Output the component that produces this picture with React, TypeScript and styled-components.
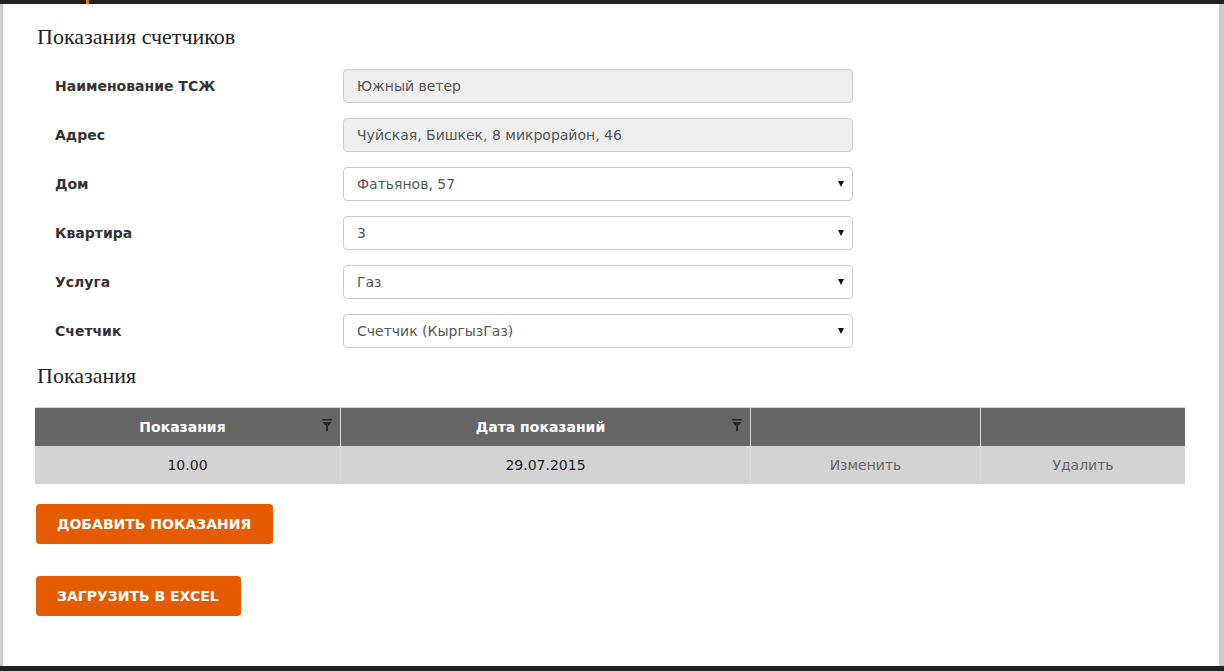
import styled, { createGlobalStyle } from "styled-components"

const GlobalStyle = createGlobalStyle`
    html, body {
        margin: 0;
        padding: 0;
        background: #ffffff;
    }
    body {
        font-family: "DejaVu Sans", Verdana, sans-serif;
    }
`

const Frame = styled.div`
    display: flex;
    flex-direction: column;
    width: 1224px;
    height: 671px;
    overflow: hidden;
`

const TopBar = styled.div`
    display: flex;
    height: 4px;
    background-color: #222222;
    padding-left: 86px;
`

const TopMark = styled.div`
    width: 3px;
    height: 4px;
    background-color: #e07a10;
`

const BottomBar = styled.div`
    height: 5px;
    background-color: #222222;
`

const Middle = styled.div`
    display: flex;
    flex: 1;
`

interface StripProps {
    w: number
}

const Strip = styled.div<StripProps>`
    width: ${p => p.w}px;
    background-color: #cccccc;
`

const Content = styled.div`
    flex: 1;
    padding: 19px 34px 0 32px;
    background-color: #ffffff;
`

const Title = styled.h2`
    margin: 0 0 0 2px;
    font-family: "Liberation Serif", "DejaVu Serif", serif;
    font-weight: normal;
    font-size: 22px;
    line-height: 28px;
    color: #222222;
`

const Form = styled.div`
    display: flex;
    flex-direction: column;
    gap: 15px;
    margin-top: 18px;
`

const Row = styled.div`
    display: flex;
    align-items: center;
    height: 34px;
`

const Label = styled.div`
    width: 308px;
    padding-left: 20px;
    box-sizing: border-box;
    font-size: 14px;
    font-weight: bold;
    color: #333333;
`

interface FieldProps {
    readOnly?: boolean
}

const Field = styled.div<FieldProps>`
    display: flex;
    align-items: center;
    justify-content: space-between;
    width: 510px;
    height: 34px;
    box-sizing: border-box;
    padding: 0 8px 0 13px;
    border: 1px solid #cccccc;
    border-radius: 4px;
    background-color: ${p => (p.readOnly ? "#eeeeee" : "#ffffff")};
    font-size: 14px;
    color: #555555;
`

const Arrow = styled.span`
    width: 0;
    height: 0;
    border-left: 3.5px solid transparent;
    border-right: 3.5px solid transparent;
    border-top: 6px solid #111111;
`

const SubTitle = styled(Title)`
    margin-top: 14px;
`

const Table = styled.div`
    display: grid;
    grid-template-columns: 305px 410px 230px 1fr;
    margin-top: 17px;
    width: 1150px;
`

interface CellProps {
    muted?: boolean
}

interface HeadProps {
    filtered?: boolean
}

const HeadCell = styled.div<HeadProps>`
    position: relative;
    display: flex;
    align-items: center;
    justify-content: center;
    height: 38px;
    padding-right: ${p => (p.filtered ? "10px" : "0")};
    background-color: #666666;
    border-left: 1px solid #d8d8d8;
    border-top: 1px solid #d8d8d8;
    font-size: 14px;
    font-weight: bold;
    color: #ffffff;
    &:first-child {
        border-left: none;
    }
`

const Filter = styled.svg`
    position: absolute;
    right: 8px;
    top: 11px;
    width: 10px;
    height: 13px;
`

const Cell = styled.div<CellProps>`
    display: flex;
    align-items: center;
    justify-content: center;
    height: 38px;
    background-color: #d3d3d3;
    border-left: 1px solid #dadada;
    font-size: 14px;
    color: ${p => (p.muted ? "#666666" : "#222222")};
    &:nth-child(4n + 1) {
        border-left: none;
    }
`

const Actions = styled.div`
    display: flex;
    flex-direction: column;
    align-items: flex-start;
    gap: 32px;
    margin-top: 20px;
    margin-left: 1px;
`

const Button = styled.button`
    height: 40px;
    padding: 0 22px 0 21px;
    border: none;
    border-radius: 4px;
    background-color: #e55c00;
    color: #ffffff;
    font-family: "DejaVu Sans", Verdana, sans-serif;
    font-size: 14px;
    font-weight: bold;
    cursor: pointer;
`

const FilterIcon = () => (
    <Filter viewBox="0 0 10 13">
        <rect x="0" y="0" width="10" height="1.5" fill="#2a2a2a" />
        <path d="M0 3 L10 3 L6 7 L6 12 L4 12.5 L4 7 Z" fill="#2a2a2a" />
    </Filter>
)

const fields = [
    { label: "Наименование ТСЖ", value: "Южный ветер", readOnly: true },
    { label: "Адрес", value: "Чуйская, Бишкек, 8 микрорайон, 46", readOnly: true },
    { label: "Дом", value: "Фатьянов, 57" },
    { label: "Квартира", value: "3" },
    { label: "Услуга", value: "Газ" },
    { label: "Счетчик", value: "Счетчик (КыргызГаз)" },
]

export default function App() {
    return (
        <Frame>
            <GlobalStyle />
            <TopBar>
                <TopMark />
            </TopBar>
            <Middle>
                <Strip w={3} />
                <Content>
                    <Title>Показания счетчиков</Title>
                    <Form>
                        {fields.map(f => (
                            <Row key={f.label}>
                                <Label>{f.label}</Label>
                                <Field readOnly={f.readOnly}>
                                    <span>{f.value}</span>
                                    {!f.readOnly && <Arrow />}
                                </Field>
                            </Row>
                        ))}
                    </Form>
                    <SubTitle>Показания</SubTitle>
                    <Table>
                        <HeadCell filtered>
                            Показания
                            <FilterIcon />
                        </HeadCell>
                        <HeadCell filtered>
                            Дата показаний
                            <FilterIcon />
                        </HeadCell>
                        <HeadCell />
                        <HeadCell />
                        <Cell>10.00</Cell>
                        <Cell>29.07.2015</Cell>
                        <Cell muted>Изменить</Cell>
                        <Cell muted>Удалить</Cell>
                    </Table>
                    <Actions>
                        <Button>ДОБАВИТЬ ПОКАЗАНИЯ</Button>
                        <Button>ЗАГРУЗИТЬ В EXCEL</Button>
                    </Actions>
                </Content>
                <Strip w={5} />
            </Middle>
            <BottomBar />
        </Frame>
    )
}
